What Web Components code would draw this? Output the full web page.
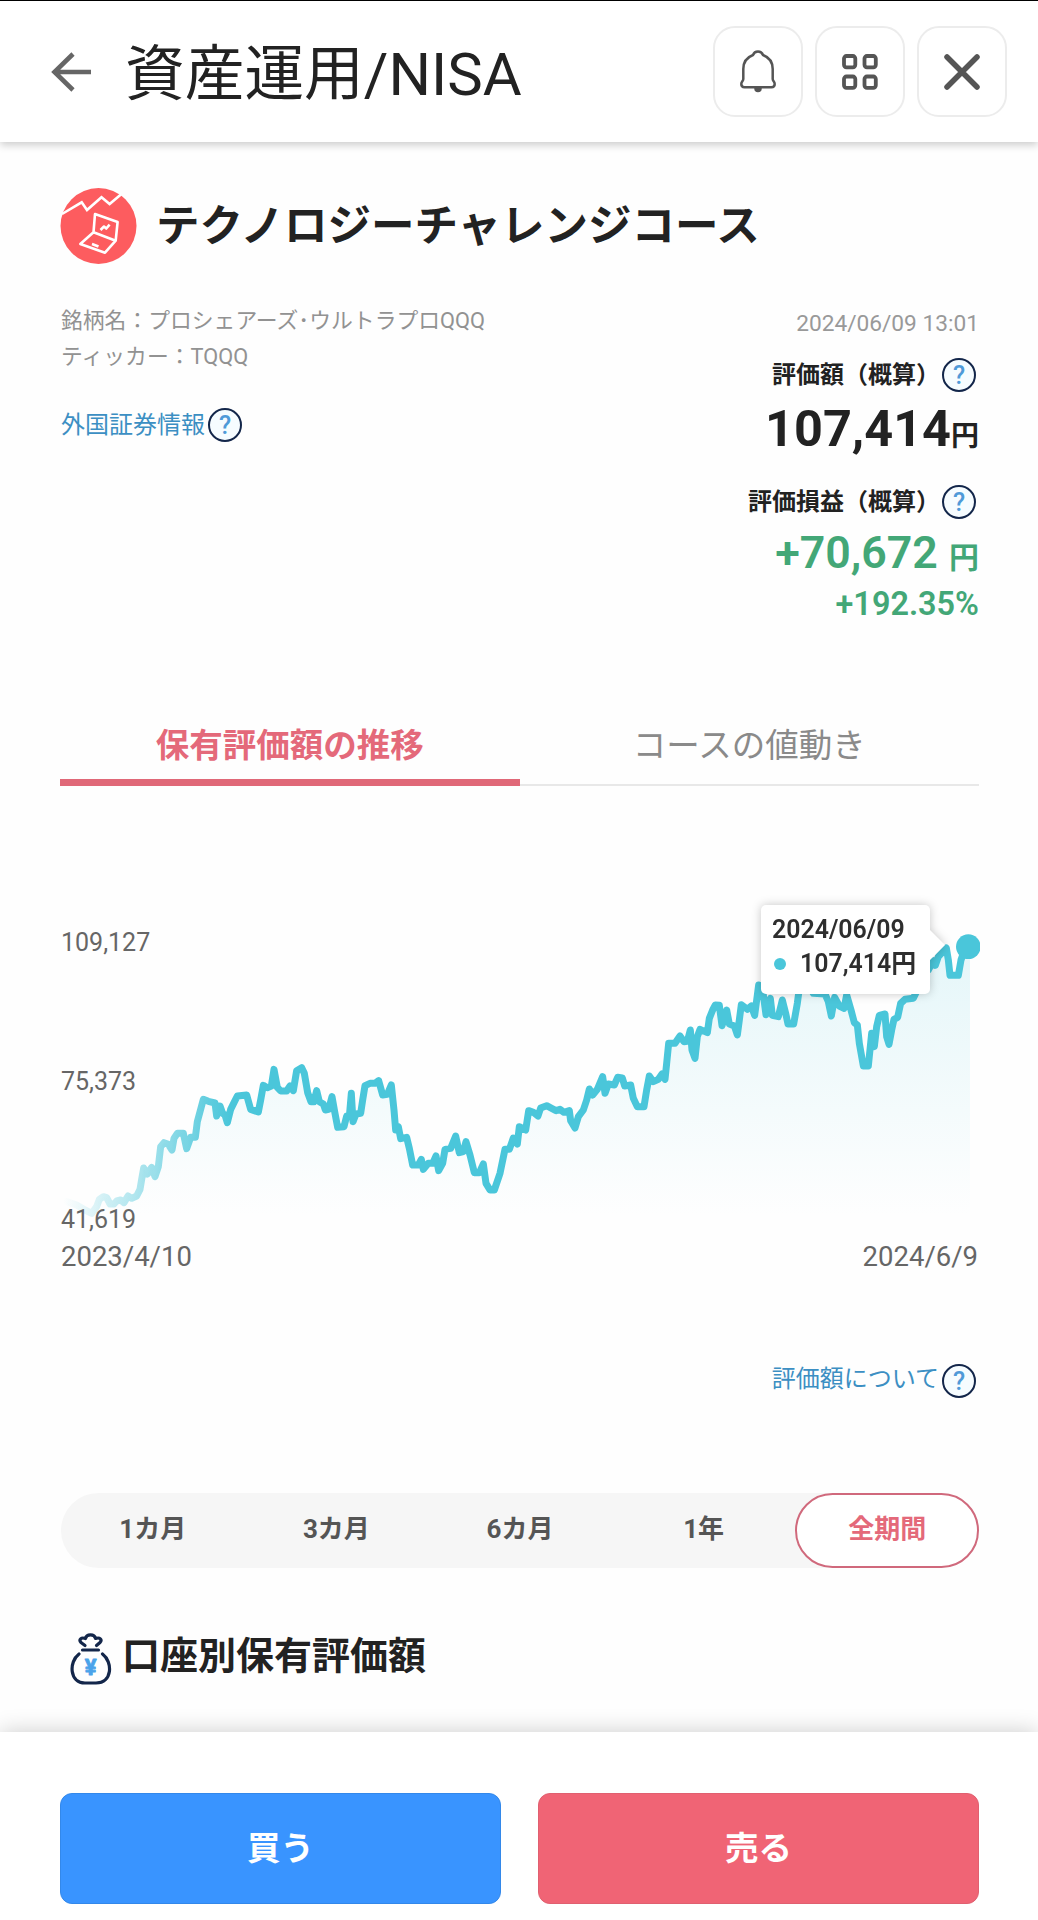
<!DOCTYPE html>
<html lang="ja">
<head>
<meta charset="utf-8">
<title>資産運用/NISA</title>
<style>
  body {
    margin: 0;
    background: #fefefe;
    color: #222;
    font-family: Roboto, "Noto Sans CJK JP", sans-serif;
  }
</style>
</head>
<body>
<nisa-app></nisa-app>

<script>
class AppHeader extends HTMLElement {
  connectedCallback() {
    this.attachShadow({ mode: 'open' });
    this.shadowRoot.innerHTML = `
      <style>
        :host {
          display: flex;
          align-items: center;
          box-sizing: border-box;
          height: 142px;
          padding: 0 31px 0 51px;
          border-top: 1px solid #000;
          background: #fff;
          box-shadow: 0 3px 8px rgba(0, 0, 0, 0.2);
        }
        .back { display: block; margin-right: 33px; }
        h1 {
          flex: 1;
          margin: 0;
          padding-top: 6px;
          font-size: 59.700px;
          font-weight: 400;
          line-height: 80px;
          white-space: nowrap;
        }
        .actions { display: flex; gap: 12px; }
        .btn {
          display: flex;
          align-items: center;
          justify-content: center;
          box-sizing: border-box;
          width: 90px;
          height: 91px;
          border: 2px solid #ececec;
          border-radius: 22px;
        }
      </style>
      <svg class="back" width="41" height="40" viewBox="0 0 41 40" fill="none" stroke="#666" stroke-width="4.6">
        <path d="M40 20H4M22 2L3.5 20L22 38"/>
      </svg>
      <h1><slot></slot></h1>
      <div class="actions">
        <div class="btn">
          <svg width="36" height="44" viewBox="0 0 36 44" fill="none" stroke="#555" stroke-width="2.5">
            <path d="M18 1.5c-2.600 0-4.200 1.200-5 3.500C6.500 7.500 3.300 12 3.300 19v10c0 2-2 2.600-2 5 0 2 1.200 3.200 3.200 3.200h27c2 0 3.200-1.200 3.200-3.200 0-2.400-2-3-2-5V19c0-7-3.200-11.500-9.700-14-.8-2.300-2.400-3.500-5-3.500z"/>
            <path d="M15 38.500h6a3 3 0 0 1-6 0z" fill="#555" stroke-width="1.500"/>
          </svg>
        </div>
        <div class="btn">
          <svg width="36" height="36" viewBox="0 0 36 36" fill="none" stroke="#555" stroke-width="3.800">
            <rect x="2" y="2" width="11.300" height="11.300" rx="2.500"/>
            <rect x="22.500" y="2" width="11.300" height="11.300" rx="2.500"/>
            <rect x="2" y="22.500" width="11.300" height="11.300" rx="2.500"/>
            <rect x="22.500" y="22.500" width="11.300" height="11.300" rx="2.500"/>
          </svg>
        </div>
        <div class="btn">
          <svg width="36" height="36" viewBox="0 0 36 36" stroke="#555" stroke-width="5.500" stroke-linecap="round">
            <path d="M3 3L33 33M33 3L3 33"/>
          </svg>
        </div>
      </div>
    `;
  }
}

class HelpIcon extends HTMLElement {
  connectedCallback() {
    this.attachShadow({ mode: 'open' });
    this.shadowRoot.innerHTML = `
      <style>
        :host {
          display: block;
          flex: none;
          box-sizing: border-box;
          width: 34px;
          height: 34px;
          border: 2px solid #13264a;
          border-radius: 50%;
          background: #f6fcff;
          color: #4f9ad8;
          font-size: 25px;
          font-weight: 500;
          line-height: 31px;
          text-align: center;
        }
      </style>?`;
  }
}

class HelpLabel extends HTMLElement {
  connectedCallback() {
    this.attachShadow({ mode: 'open' });
    this.shadowRoot.innerHTML = `
      <style>
        :host {
          display: flex;
          align-items: center;
          gap: 2px;
          height: 34px;
          font-size: 24px;
          line-height: 34px;
          font-weight: 700;
          white-space: nowrap;
        }
        :host([link]) {
          gap: 3px;
          color: #3c8fc3;
          font-weight: 400;
        }
        :host([raised]) span { padding-bottom: 5px; }
      </style>
      <span><slot></slot></span><help-icon></help-icon>
    `;
  }
}

class CourseTitle extends HTMLElement {
  connectedCallback() {
    this.attachShadow({ mode: 'open' });
    this.shadowRoot.innerHTML = `
      <style>
        :host {
          display: flex;
          align-items: center;
          gap: 19px;
          height: 76px;
        }
        svg { display: block; }
        h2 {
          margin: 0;
          padding-top: 2px;
          font-size: 43.500px;
          font-weight: 700;
          line-height: 60px;
          white-space: nowrap;
        }
      </style>
      <svg width="77" height="76" viewBox="0 0 77 76" fill="none" stroke="#fff" stroke-width="2.600" stroke-linejoin="round">
        <circle cx="38.500" cy="38" r="38" fill="#fd5c5f" stroke="none"/>
        <path d="M2 26L21.700 14.300L27 22L41.500 9.300L49.600 16L61.500 6" stroke-linejoin="miter"/>
        <path d="M35 26L57.600 34L55.700 52.700L33.500 44.300zM33.500 44.300L20.300 56L45 64.700L55.700 52.700"/>
        <path d="M40.500 42L44 38.500L46.300 40.500L49.600 36.700M32 56L38.500 58.500"/>
      </svg>
      <h2><slot></slot></h2>
    `;
  }
}

class CourseSummary extends HTMLElement {
  connectedCallback() {
    this.attachShadow({ mode: 'open' });
    this.shadowRoot.innerHTML = `
      <style>
        :host {
          display: flex;
          justify-content: space-between;
          margin-top: 39px;
          height: 319px;
          white-space: nowrap;
        }
        .meta {
          padding-left: 1px;
          color: #929292;
          font-size: 21.800px;
          line-height: 36px;
        }
        .meta help-label { margin-top: 33px; }
        .values {
          display: flex;
          flex-direction: column;
          align-items: flex-end;
        }
        .values help-label { margin-right: 3px; }
        .date { color: #999; font-size: 22.700px; line-height: 41px; margin-bottom: 14px; }
        .amount {
          margin: 9px 0 28px;
          font-size: 50.400px;
          font-weight: 700;
          line-height: 56px;
        }
        small { line-height: 1; }
        .amount small { font-size: 28px; }
        .profit {
          margin-top: 9px;
          color: #43a777;
          font-size: 44.700px;
          font-weight: 600;
          line-height: 50px;
        }
        .profit small { font-size: 30px; }
        .rate {
          margin-top: 8px;
          color: #43a777;
          font-size: 32.400px;
          font-weight: 600;
          line-height: 36px;
        }
      </style>
      <div class="meta">
        <div>銘柄名：プロシェアーズ･ウルトラプロQQQ</div>
        <div>ティッカー：TQQQ</div>
        <help-label link>外国証券情報</help-label>
      </div>
      <div class="values">
        <div class="date">2024/06/09 13:01</div>
        <help-label>評価額（概算）</help-label>
        <div class="amount">107,414<small>円</small></div>
        <help-label>評価損益（概算）</help-label>
        <div class="profit">+70,672 <small>円</small></div>
        <div class="rate">+192.35%</div>
      </div>
    `;
  }
}

class ChartTabs extends HTMLElement {
  connectedCallback() {
    this.attachShadow({ mode: 'open' });
    this.shadowRoot.innerHTML = `
      <style>
        :host {
          display: grid;
          grid-template: 80px / 1fr 1fr;
          margin-top: 84px;
          height: 80px;
          font-size: 33.500px;
          line-height: 80px;
          text-align: center;
        }
        div {
          box-sizing: border-box;
          color: #8a8a8a;
          border-bottom: 2px solid #e8e8e8;
        }
        .on {
          color: #e4697a;
          font-weight: 700;
          border-bottom: 7px solid #e06878;
        }
      </style>
      <div class="on">保有評価額の推移</div>
      <div>コースの値動き</div>
    `;
  }
}

// chart units are a third of a pixel
const FIRST_HALF = [
  [80,905],[110,915],[135,930],[155,940],[170,920],[178,898],[190,890],[200,893],[210,912],[222,912],
  [230,903],[242,900],[252,908],[264,888],[275,895],[290,888],[300,868],[305,838],[311,804],[322,822],
  [335,802],[345,830],[355,800],[362,740],[372,728],[385,733],[396,750],[402,715],[412,700],[430,700],
  [440,746],[452,712],[466,712],[472,665],[490,598],[505,604],[525,609],[530,648],[540,618],[548,640],
  [555,645],[562,668],[572,628],[582,608],[592,588],[620,585],[632,628],[655,636],[662,600],[670,556],
  [682,563],[694,558],[702,508],[712,562],[722,573],[740,573],[750,558],[760,572],[770,512],[785,503],
  [793,520],[803,578],[813,605],[822,605],[830,572],[838,605],[850,612],[856,630],[866,628],[876,590],
  [884,635],[893,682],[912,680],[920,648],[928,650],[934,580],[939,665],[948,642],[962,640],[968,600],
  [975,557],[990,550],[1005,550],[1016,542],[1028,585],[1042,583],[1054,555],[1062,630],[1067,690],[1075,680],
  [1082,716],[1100,712],[1108,745],[1118,795],[1135,795],[1144,778],[1150,808],[1165,790],[1178,790],[1188,768],
  [1196,812],[1208,790],[1215,748],[1232,745],[1247,708],[1258,758],[1270,755],[1278,725],[1290,765],[1303,818],
  [1318,818],[1330,792],[1338,850],[1350,870],[1363,870],[1380,820],[1395,748],[1408,748],[1420,714],[1432,732],
  [1438,680],[1457,690],[1466,632],[1480,637],[1494,648]
];
const SECOND_HALF = [
  [62,684],[80,677],[95,685],[108,692],[120,688],[132,697],[148,692],[152,722],[165,744],[175,710],
  [190,690],[200,660],[208,627],[218,645],[232,628],[248,590],[255,640],[265,612],[283,615],[293,592],
  [307,594],[314,618],[332,615],[340,655],[352,680],[372,680],[380,630],[388,588],[400,605],[415,598],
  [426,582],[435,598],[440,550],[446,490],[465,490],[480,468],[492,485],[502,484],[511,450],[516,510],
  [525,535],[532,470],[540,448],[562,458],[568,415],[578,390],[586,375],[598,376],[606,437],[620,390],
  [628,432],[643,438],[652,465],[658,420],[664,374],[682,388],[694,378],[704,406],[716,315],[730,345],
  [738,404],[751,355],[757,406],[775,410],[787,360],[797,400],[804,432],[821,432],[832,370],[840,310],
  [855,290],[880,340],[915,342],[925,365],[934,408],[944,352],[958,378],[972,385],[980,345],[993,390],
  [1003,428],[1012,435],[1018,490],[1030,558],[1045,558],[1055,460],[1063,500],[1070,440],[1078,406],[1095,402],
  [1100,470],[1107,493],[1115,450],[1122,418],[1133,412],[1142,370],[1155,358],[1180,355],[1192,330],[1205,285],
  [1225,270],[1240,242],[1246,256],[1255,230],[1279,204],[1285,240],[1290,286],[1315,286],[1323,240],[1335,205],[1345,200]
];

class AssetChart extends HTMLElement {
  connectedCallback() {
    const points = FIRST_HALF.concat(SECOND_HALF.map(([x, y]) => [x + 1440, y - 60]));
    const line = points.map(p => p.join(',')).join(' ');
    this.attachShadow({ mode: 'open' });
    this.shadowRoot.innerHTML = `
      <style>
        :host { display: block; margin-top: 84px; color: #666; }
        .plot {
          display: grid;
          position: relative;
          height: 363px;
        }
        .plot > svg, .scale { grid-area: 1 / 1; }
        .scale {
          display: flex;
          flex-direction: column;
          justify-content: space-between;
          height: 307px;
          padding: 58px 0 0 1px;
          font-size: 25px;
          line-height: 30px;
        }
        .dates {
          display: flex;
          justify-content: space-between;
          margin: 7px 1px 0;
          font-size: 27.500px;
          line-height: 33px;
        }
        .tip {
          position: absolute;
          left: 701px;
          top: 35px;
          box-sizing: border-box;
          width: 169px;
          height: 89px;
          padding: 8px 11px;
          border-radius: 5px;
          background: #fff;
          color: #2e2e2e;
          font-size: 24.900px;
          font-weight: 600;
          line-height: 34px;
          white-space: nowrap;
          filter: drop-shadow(0 0 5px rgba(0, 0, 0, 0.22));
        }
        .tip::after {
          content: '';
          position: absolute;
          left: 168px;
          top: 24px;
          border: 16px solid transparent;
          border-left-color: #fff;
          border-right: 0;
        }
        .row { display: flex; align-items: center; }
        .row i {
          width: 12px;
          height: 12px;
          margin: 0 14px 0 2px;
          border-radius: 50%;
          background: #4ac6da;
        }
      </style>
      <div class="plot">
        <svg width="920" height="360" viewBox="60 -90 2760 1080">
          <defs>
            <linearGradient id="area" gradientUnits="userSpaceOnUse" x1="0" y1="140" x2="0" y2="950">
              <stop offset="0" stop-color="#4ac6da" stop-opacity=".14"/>
              <stop offset="1" stop-color="#4ac6da" stop-opacity="0"/>
            </linearGradient>
            <linearGradient id="stroke" gradientUnits="userSpaceOnUse" x1="70" y1="0" x2="570" y2="0">
              <stop offset="0" stop-color="#4ac6da" stop-opacity="0"/>
              <stop offset="1" stop-color="#4ac6da"/>
            </linearGradient>
          </defs>
          <polygon points="80,960 ${line} 2790,140 2790,960" fill="url(#area)"/>
          <polyline points="${line}" fill="none" stroke="url(#stroke)" stroke-width="21" stroke-linejoin="round" stroke-linecap="round"/>
          <circle cx="2785" cy="140" r="37" fill="#4ac6da"/>
        </svg>
        <div class="scale"><span>109,127</span><span>75,373</span><span>41,619</span></div>
        <div class="tip">
          <div>2024/06/09</div>
          <div class="row"><i></i>107,414円</div>
        </div>
      </div>
      <div class="dates"><span>2023/4/10</span><span>2024/6/9</span></div>
    `;
  }
}

class PeriodPicker extends HTMLElement {
  connectedCallback() {
    this.attachShadow({ mode: 'open' });
    this.shadowRoot.innerHTML = `
      <style>
        :host {
          display: grid;
          grid-template-columns: repeat(5, 1fr);
          margin: 95px 0 0 1px;
          height: 75px;
          border-radius: 38px;
          background: #f6f6f6;
          color: #555;
          font-size: 26px;
          font-weight: 700;
          line-height: 73px;
          text-align: center;
        }
        .on {
          box-sizing: border-box;
          border: 2px solid #d0697c;
          border-radius: 38px;
          background: #fff;
          color: #e4697a;
          line-height: 69px;
        }
      </style>
      <div>1カ月</div><div>3カ月</div><div>6カ月</div><div>1年</div><div class="on">全期間</div>
    `;
  }
}

class AccountHeading extends HTMLElement {
  connectedCallback() {
    this.attachShadow({ mode: 'open' });
    this.shadowRoot.innerHTML = `
      <style>
        :host {
          display: flex;
          align-items: flex-start;
          gap: 10px;
          margin: 65px 0 0 10px;
          height: 52px;
        }
        svg { display: block; }
        text { font: 700 22px Roboto, sans-serif; }
        h3 {
          margin: 0;
          font-size: 38px;
          font-weight: 700;
          line-height: 47px;
        }
      </style>
      <svg width="42" height="52" viewBox="0 0 42 52" fill="none" stroke="#13264a" stroke-width="3.200" stroke-linecap="round" stroke-linejoin="round">
        <path d="M15 12.500L11 9.500C8.500 6.500 11 4 15.500 5.500C16.500 .7 24.500 .7 25.500 5.500C30 4 32.500 6.500 30 9.500L26.500 12.500"/>
        <path d="M12.500 17H28.500"/>
        <path d="M9 21C-1.500 29-.5 50 15 50H26C42.500 50 43 29 32.500 21"/>
        <text x="20.700" y="41.500" text-anchor="middle" fill="#4aa3ea" stroke="#4aa3ea" stroke-width=".8">¥</text>
      </svg>
      <h3><slot></slot></h3>
    `;
  }
}

class TradeBar extends HTMLElement {
  connectedCallback() {
    this.attachShadow({ mode: 'open' });
    this.shadowRoot.innerHTML = `
      <style>
        :host {
          display: grid;
          grid-template-columns: 1fr 1fr;
          gap: 37px;
          box-sizing: border-box;
          height: 188px;
          padding: 61px 59px 0 60px;
          background: #fff;
          box-shadow: 0 0 22px rgba(0, 0, 0, 0.2);
        }
        button {
          height: 111px;
          padding: 0;
          border: 1px solid #3388ea;
          border-radius: 12px;
          background: #3994ff;
          color: #fff;
          font: 700 33.500px/107px Roboto, "Noto Sans CJK JP", sans-serif;
        }
        .sell { background: #f06475; border-color: #e06070; }
      </style>
      <button>買う</button><button class="sell">売る</button>
    `;
  }
}

class NisaApp extends HTMLElement {
  connectedCallback() {
    this.attachShadow({ mode: 'open' });
    this.shadowRoot.innerHTML = `
      <style>
        :host {
          display: flex;
          flex-direction: column;
          width: 1038px;
          height: 1920px;
          overflow: hidden;
        }
        main { flex: 1; padding: 46px 59px 0 60px; }
        .about {
          display: flex;
          justify-content: flex-end;
          margin: 91px 3px 0 0;
        }
      </style>
      <app-header>資産運用/NISA</app-header>
      <main>
        <course-title>テクノロジーチャレンジコース</course-title>
        <course-summary></course-summary>
        <chart-tabs></chart-tabs>
        <asset-chart></asset-chart>
        <div class="about"><help-label link raised>評価額について</help-label></div>
        <period-picker></period-picker>
        <account-heading>口座別保有評価額</account-heading>
      </main>
      <trade-bar></trade-bar>
    `;
  }
}

customElements.define('help-icon', HelpIcon);
customElements.define('help-label', HelpLabel);
customElements.define('app-header', AppHeader);
customElements.define('course-title', CourseTitle);
customElements.define('course-summary', CourseSummary);
customElements.define('chart-tabs', ChartTabs);
customElements.define('asset-chart', AssetChart);
customElements.define('period-picker', PeriodPicker);
customElements.define('account-heading', AccountHeading);
customElements.define('trade-bar', TradeBar);
customElements.define('nisa-app', NisaApp);
</script>
</body>
</html>
